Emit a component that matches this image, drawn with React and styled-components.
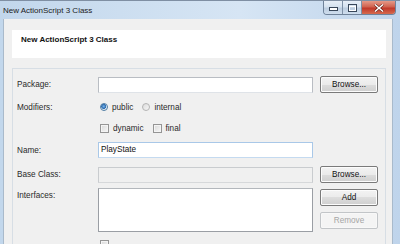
import styled, { createGlobalStyle } from "styled-components";

const GlobalStyle = createGlobalStyle`
  html, body {
    margin: 0;
    padding: 0;
    background: #ffffff;
  }
  body {
    font-family: "Liberation Sans", Arial, sans-serif;
  }
`;

const Window = styled.div`
  width: 400px;
  height: 244px;
  overflow: hidden;
  display: flex;
  flex-direction: column;
  background: linear-gradient(to right, #c2d7ec, #d6e5f4 60%, #bfd4eb);
  border-top: 1px solid #7f8fa3;
  box-sizing: border-box;
`;

const TitleBar = styled.div`
  height: 18px;
  display: flex;
  align-items: flex-start;
  padding: 0 4px 0 3px;
  flex-shrink: 0;
`;

const Title = styled.span`
  font-size: 8px;
  line-height: 19px;
  color: #1b1b1b;
`;

const Caption = styled.div`
  margin-left: auto;
  display: flex;
  height: 13px;
  border: 1px solid #6f8299;
  border-top: none;
  border-radius: 0 0 4px 4px;
  overflow: hidden;
`;

const CaptionButton = styled.div`
  width: ${(p) => p.$w}px;
  height: 100%;
  display: flex;
  align-items: center;
  justify-content: center;
  border-left: ${(p) => (p.$first ? "none" : "1px solid #7d90a6")};
  background: ${(p) =>
    p.$close
      ? "linear-gradient(#e59a88, #d0624f 45%, #c0392a 55%, #d66a4e)"
      : "linear-gradient(#e6eef7, #d5e2ef 45%, #bccde0 55%, #cfdeee)"};
`;

const Client = styled.div`
  flex: 1;
  display: flex;
  flex-direction: column;
  min-width: 0;
  background: #f0f0f0;
  margin: 0 7px 0 3px;
  border-left: 1px solid #a9bacb;
  border-right: 1px solid #a9bacb;
  padding: 11px 6px 0 8px;
`;

const Header = styled.div`
  height: 28px;
  background: #ffffff;
  padding: 5px 9px 0;
  box-sizing: border-box;
`;

const HeaderTitle = styled.div`
  font-size: 8px;
  font-weight: bold;
  line-height: 10px;
  color: #111;
`;

const Panel = styled.div`
  margin-top: 10px;
  flex: 1;
  border: 1px solid #d7dee5;
  border-bottom: none;
  padding: 7px 0 0 4px;
`;

const Row = styled.div`
  display: grid;
  grid-template-columns: 74px 215px 58px;
  column-gap: 7px;
  justify-content: start;
  align-items: ${(p) => (p.$top ? "start" : "center")};
  margin-top: ${(p) => p.$gap || 0}px;
  min-height: 16px;
`;

const Label = styled.span`
  font-size: 8.2px;
  color: #2a2a2a;
  padding-top: ${(p) => (p.$top ? 3 : 0)}px;
`;

const Input = styled.div`
  height: 16px;
  box-sizing: border-box;
  border: 1px solid ${(p) => (p.$focused ? "#a9c8e8" : p.$disabled ? "#c9cccf" : "#b9bdc3")};
  border-bottom-color: ${(p) => (p.$focused ? "#c4daf0" : p.$disabled ? "#d6d8da" : "#dfe3e8")};
  background: ${(p) => (p.$disabled ? "#f0f0f0" : "#ffffff")};
  font-size: 8.2px;
  line-height: 14px;
  padding-left: 2px;
  color: #111;
`;

const ListBox = styled.div`
  height: 44px;
  box-sizing: border-box;
  border: 1px solid #9a9ea4;
  border-top-color: #b3b7bc;
  background: #ffffff;
`;

const Button = styled.div`
  height: 17px;
  box-sizing: border-box;
  border: 1px solid ${(p) => (p.$disabled ? "#c2c5c8" : "#7a7a7a")};
  border-radius: 2px;
  display: flex;
  align-items: center;
  justify-content: center;
  font-size: 8.2px;
  color: ${(p) => (p.$disabled ? "#a6a6a6" : "#111")};
  background: ${(p) =>
    p.$disabled
      ? "#f4f4f4"
      : "linear-gradient(#f3f3f3, #ebebeb 50%, #dddddd 50%, #cfcfcf)"};
  box-shadow: inset 0 0 0 1px ${(p) => (p.$disabled ? "#f8f8f8" : "#fcfcfc")};
`;

const ButtonStack = styled.div`
  display: flex;
  flex-direction: column;
  gap: 6px;
  padding-top: 1px;
`;

const Options = styled.div`
  display: flex;
  align-items: center;
  padding-left: 2px;
`;

const Option = styled.label`
  display: flex;
  align-items: center;
  gap: 4px;
  margin-right: ${(p) => p.$space || 0}px;
  font-size: 8.2px;
  color: #2a2a2a;
`;

const Radio = styled.span`
  width: 8px;
  height: 8px;
  box-sizing: border-box;
  border-radius: 50%;
  border: 1px solid ${(p) => (p.$checked ? "#4f7ca3" : "#b4b4b4")};
  background: ${(p) =>
    p.$checked
      ? "radial-gradient(circle at 45% 40%, #7fb8ea 0, #2a6ab0 45%, #e6eef5 58%)"
      : "linear-gradient(135deg, #dcdcdc, #f6f6f6)"};
`;

const Check = styled.span`
  width: 9px;
  height: 9px;
  box-sizing: border-box;
  border: 1px solid #959595;
  background: linear-gradient(135deg, #d8d8d8, #f8f8f8);
  box-shadow: inset 0 0 0 1px #f4f4f4;
`;

function MinimizeIcon() {
  return (
    <svg width="9" height="6" viewBox="0 0 9 6">
      <rect x="0.5" y="2.5" width="8" height="3" fill="#ffffff" stroke="#38475a" />
    </svg>
  );
}

function MaximizeIcon() {
  return (
    <svg width="9" height="8" viewBox="0 0 9 8">
      <rect x="0.5" y="0.5" width="8" height="7" fill="none" stroke="#38475a" />
      <rect x="1.5" y="2.5" width="6" height="4" fill="none" stroke="#ffffff" />
    </svg>
  );
}

function CloseIcon() {
  return (
    <svg width="10" height="8" viewBox="0 0 10 8">
      <path d="M1 0.5 L9 7.5 M9 0.5 L1 7.5" stroke="#5a1d14" strokeWidth="2.6" fill="none" />
      <path d="M1 0.5 L9 7.5 M9 0.5 L1 7.5" stroke="#ffffff" strokeWidth="1.5" fill="none" />
    </svg>
  );
}

export default function App() {
  return (
    <>
      <GlobalStyle />
      <Window>
        <TitleBar>
          <Title>New ActionScript 3 Class</Title>
          <Caption>
            <CaptionButton $w={18} $first>
              <MinimizeIcon />
            </CaptionButton>
            <CaptionButton $w={18}>
              <MaximizeIcon />
            </CaptionButton>
            <CaptionButton $w={33} $close>
              <CloseIcon />
            </CaptionButton>
          </Caption>
        </TitleBar>

        <Client>
          <Header>
            <HeaderTitle>New ActionScript 3 Class</HeaderTitle>
          </Header>

          <Panel>
            <Row>
              <Label>Package:</Label>
              <Input />
              <Button>Browse...</Button>
            </Row>

            <Row $gap={6}>
              <Label>Modifiers:</Label>
              <Options>
                <Option $space={9}>
                  <Radio $checked />
                  public
                </Option>
                <Option>
                  <Radio />
                  internal
                </Option>
              </Options>
            </Row>

            <Row $gap={5}>
              <span />
              <Options>
                <Option $space={9}>
                  <Check />
                  dynamic
                </Option>
                <Option>
                  <Check />
                  final
                </Option>
              </Options>
            </Row>

            <Row $gap={6}>
              <Label>Name:</Label>
              <Input $focused>PlayState</Input>
            </Row>

            <Row $gap={8}>
              <Label>Base Class:</Label>
              <Input $disabled />
              <Button>Browse...</Button>
            </Row>

            <Row $gap={5} $top>
              <Label $top>Interfaces:</Label>
              <ListBox />
              <ButtonStack>
                <Button>Add</Button>
                <Button $disabled>Remove</Button>
              </ButtonStack>
            </Row>

            <Row $gap={8} $top>
              <span />
              <Options>
                <Check />
              </Options>
            </Row>
          </Panel>
        </Client>
      </Window>
    </>
  );
}
